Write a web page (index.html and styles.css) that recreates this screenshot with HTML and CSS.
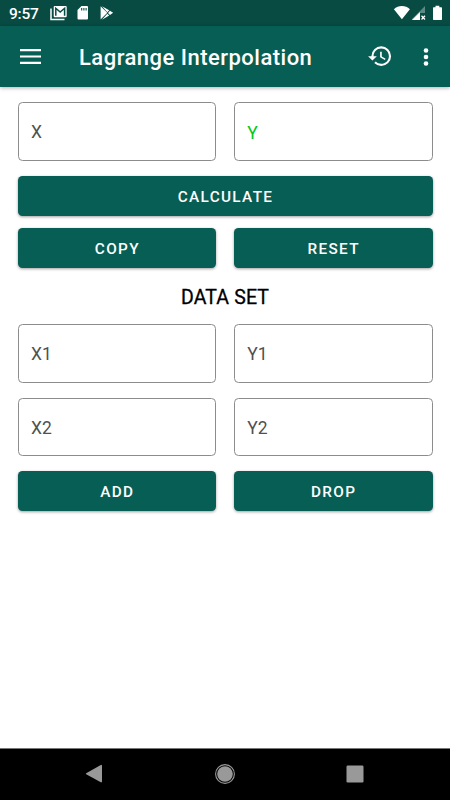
FILE: index.html
```html
<!DOCTYPE html>
<html lang="en">
<head>
<meta charset="utf-8">
<title>Lagrange Interpolation</title>
<link rel="stylesheet" href="styles.css">
</head>
<body>
<div class="screen">
  <div class="status">
    <span class="time">9:57</span>
    <svg class="status-left" width="66" height="16" viewBox="0 0 66 16">
      <path d="M1 3.5V14.5H14.5" fill="none" stroke="#fff" stroke-width="1.5"/>
      <rect x="3.7" y="1" width="13" height="11.3" rx="1" fill="#fff"/>
      <path d="M5.8 10.8V3.3L10.2 7L14.6 3.3V10.8" fill="none" stroke="#074b42" stroke-width="1.5"/>
      <path d="M31.5 1H37Q38 1 38 2V13.5Q38 14.5 37 14.5H28.5Q27.5 14.5 27.5 13.5V5Z" fill="#fff"/>
      <path d="M31.7 3V5.6M33.9 3V5.6M36.1 3V5.6" stroke="#074b42" stroke-width="1.1"/>
      <path d="M50.6 1.3L57.3 7.8L50.6 14.6Z" fill="#fff"/>
      <path d="M52 1.2L59.2 5.3L57.3 7.2ZM60 5.8L63.1 7.8L60 9.9L58 7.9ZM52 14.7L57.3 8.7L59.2 10.5Z" fill="#fff"/>
    </svg>
    <svg class="status-right" width="50" height="16" viewBox="0 0 50 16">
      <path d="M.9 4.2Q4.3 1 8.9 1T16.9 4.2L8.9 14.2Z" fill="#fff"/>
      <path d="M32 1V8H27V15H19V14Z" fill="#fff" opacity=".35"/>
      <path d="M19 15L27 7V15Z" fill="#fff"/>
      <path d="M28.5 10.8L32 14.5M32 10.8L28.5 14.5" stroke="#fff" stroke-width="1.3"/>
      <path d="M42.5 .7H46.3V2.2H48.3Q49 2.2 49 3V14.3Q49 15 48.3 15H40.7Q40 15 40 14.3V3Q40 2.2 40.7 2.2H42.5Z" fill="#fff"/>
    </svg>
  </div>
  <header class="appbar">
    <svg class="menu" width="21" height="15" viewBox="0 0 21 15"><path d="M0 1.2H21M0 7.5H21M0 13.8H21" stroke="#fff" stroke-width="2.2"/></svg>
    <h1 class="title">Lagrange Interpolation</h1>
    <svg class="history" width="26.25" height="26.25" viewBox="0 0 24 24"><path fill="#fff" d="M13 3a9 9 0 0 0-9 9H1l3.89 3.89.07.14L9 12H6c0-3.87 3.13-7 7-7s7 3.13 7 7-3.13 7-7 7c-1.93 0-3.68-.79-4.94-2.06l-1.42 1.42A8.954 8.954 0 0 0 13 21a9 9 0 0 0 0-18zm-1 5v5l4.28 2.54.72-1.21-3.5-2.08V8H12z"/></svg>
    <svg class="more" width="6" height="20" viewBox="0 0 6 20"><g fill="#fff"><circle cx="3" cy="3.5" r="2.3"/><circle cx="3" cy="10" r="2.3"/><circle cx="3" cy="16.5" r="2.3"/></g></svg>
  </header>
  <main class="content">
    <div class="row"><div class="field">X</div><div class="field result">Y</div></div>
    <div class="row calc"><button class="btn">CALCULATE</button></div>
    <div class="row actions"><button class="btn">COPY</button><button class="btn">RESET</button></div>
    <h2 class="heading">DATA SET</h2>
    <div class="row"><div class="field">X1</div><div class="field">Y1</div></div>
    <div class="row next"><div class="field">X2</div><div class="field">Y2</div></div>
    <div class="row edit"><button class="btn">ADD</button><button class="btn">DROP</button></div>
  </main>
  <nav class="navbar">
    <svg width="18" height="20" viewBox="0 0 18 20"><path d="M1.2 9.3L15.8 .9Q17 .6 17 1.8V17.4Q17 18.6 15.8 18.2L1.2 10.3Q.5 9.8 1.2 9.3Z" fill="#999"/></svg>
    <svg width="22" height="22" viewBox="0 0 22 22"><circle cx="11" cy="11" r="9.4" fill="none" stroke="#999" stroke-width="1.1"/><circle cx="11" cy="11" r="7.8" fill="#999"/></svg>
    <svg width="18" height="18" viewBox="0 0 18 18"><rect x=".5" y=".5" width="17" height="17" rx="1.2" fill="#999"/></svg>
  </nav>
</div>
</body>
</html>
```
FILE: styles.css
```css
* { box-sizing: border-box; }
body { margin: 0; font-family: Roboto, sans-serif; background: #fff; }
svg { display: block; flex: none; }
.screen { width: 450px; height: 800px; display: flex; flex-direction: column; overflow: hidden; }
.status { height: 26px; flex: none; background: #074b42; display: flex; align-items: center; padding: 0 7px 0 9px; }
.time { width: 41px; color: #fff; font-size: 15.5px; font-weight: 500; line-height: 26px; letter-spacing: -.2px; padding-top: 1px; }
.status-right { margin-left: auto; }
.appbar { height: 61px; flex: none; background: #075e54; display: flex; align-items: center; padding: 0 21px 0 20px; box-shadow: 0 1px 4px rgba(0,0,0,.3); }
.title { margin: 0 0 0 38px; width: 288px; color: #fff; font-size: 22px; font-weight: 500; line-height: 30px; letter-spacing: .48px; white-space: nowrap; padding-top: 3px; }
.more { margin-left: auto; }
.content { flex: 1; padding: 15px 17.5px 0; }
.row { display: flex; gap: 17.5px; }
.field { flex: 1; height: 58.5px; border: 1px solid #8c8c8c; border-radius: 4.5px; padding: 1px 12.4px 0; font-size: 17.5px; line-height: 57px; letter-spacing: .1px; color: #505050; }
.result { color: #00c817; padding-top: 2px; }
.btn { flex: 1; height: 39.8px; border: 0; border-radius: 4.5px; padding: 2px 0 0 1px; background: #075e54; color: #fff; font-family: inherit; font-size: 15.3px; font-weight: 500; line-height: 38px; letter-spacing: 1.35px; box-shadow: 0 1px 3px rgba(0,0,0,.38); }
.calc { margin-top: 15.3px; }
.actions { margin-top: 12.9px; }
.heading { margin: 15px 0 12px; font-size: 19.5px; font-weight: 400; line-height: 29px; text-align: center; color: #000; letter-spacing: .15px; -webkit-text-stroke: .3px #000; }
.next { margin-top: 15.2px; }
.edit { margin-top: 15px; }
.navbar { height: 52.5px; flex: none; background: #000; display: flex; align-items: center; justify-content: space-between; padding: 0 86.5px 0 85px; border-top: 1px solid #777; }
.navbar svg:nth-child(2) { margin-left: 1.5px; }
```
